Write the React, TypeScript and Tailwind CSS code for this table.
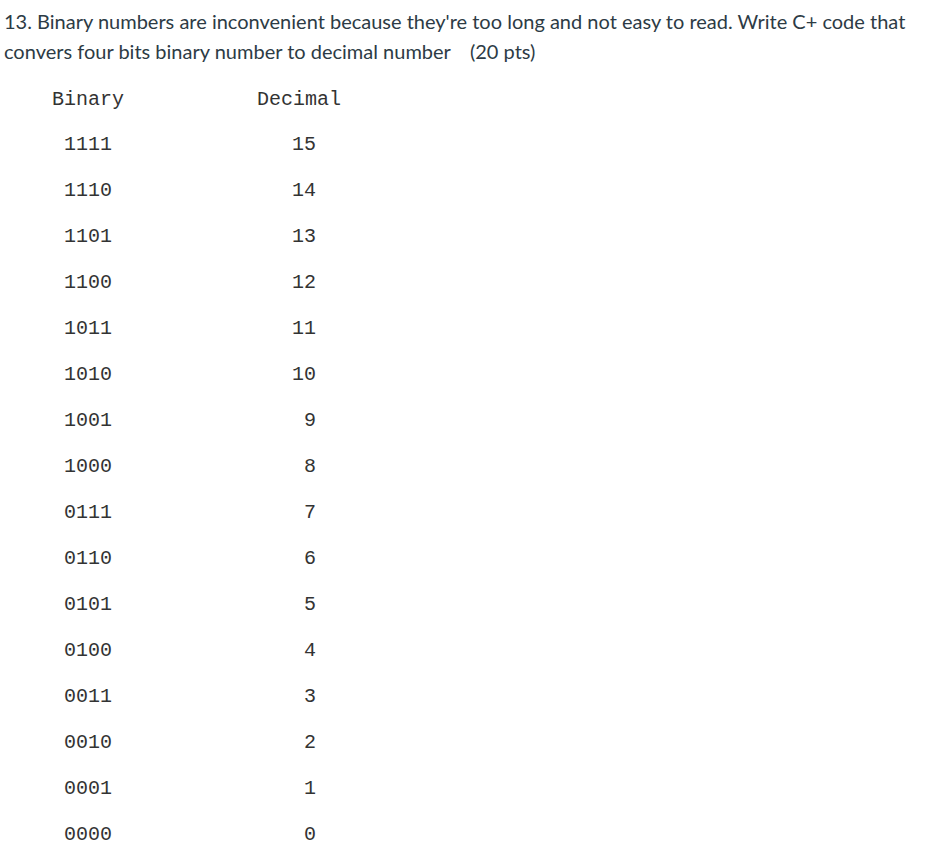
const rows: [string, string][] = [
  ["1111", "15"],
  ["1110", "14"],
  ["1101", "13"],
  ["1100", "12"],
  ["1011", "11"],
  ["1010", "10"],
  ["1001", "9"],
  ["1000", "8"],
  ["0111", "7"],
  ["0110", "6"],
  ["0101", "5"],
  ["0100", "4"],
  ["0011", "3"],
  ["0010", "2"],
  ["0001", "1"],
  ["0000", "0"],
];

export default function App() {
  return (
    <div className="min-h-screen w-[926px] bg-white">
      {/* Question */}
      <p className="pl-[4px] pt-[6px] text-[20px] leading-[30px] text-[#2d3b45] [font-family:Lato,'Noto_Sans',sans-serif]">
        13. Binary numbers are inconvenient because they're too long and not easy to read. Write C+ code that
        <br />
        convers four bits binary number to decimal number
        <span className="ml-[19px]">(20 pts)</span>
      </p>

      {/* Table */}
      <div className="mt-[22px] pl-[52px] text-[20px] leading-[24px] text-[#333] [font-family:'Liberation_Mono','Courier_New',monospace]">
        <div className="flex">
          <div className="w-[205px]">Binary</div>
          <div>Decimal</div>
        </div>
        <div className="mt-[21px] flex flex-col gap-[22px]">
          {rows.map(([bin, dec]) => (
            <div key={bin} className="flex">
              <div className="w-[205px] pl-[12px]">{bin}</div>
              <div className="w-[59px] text-right">{dec}</div>
            </div>
          ))}
        </div>
      </div>
    </div>
  );
}
